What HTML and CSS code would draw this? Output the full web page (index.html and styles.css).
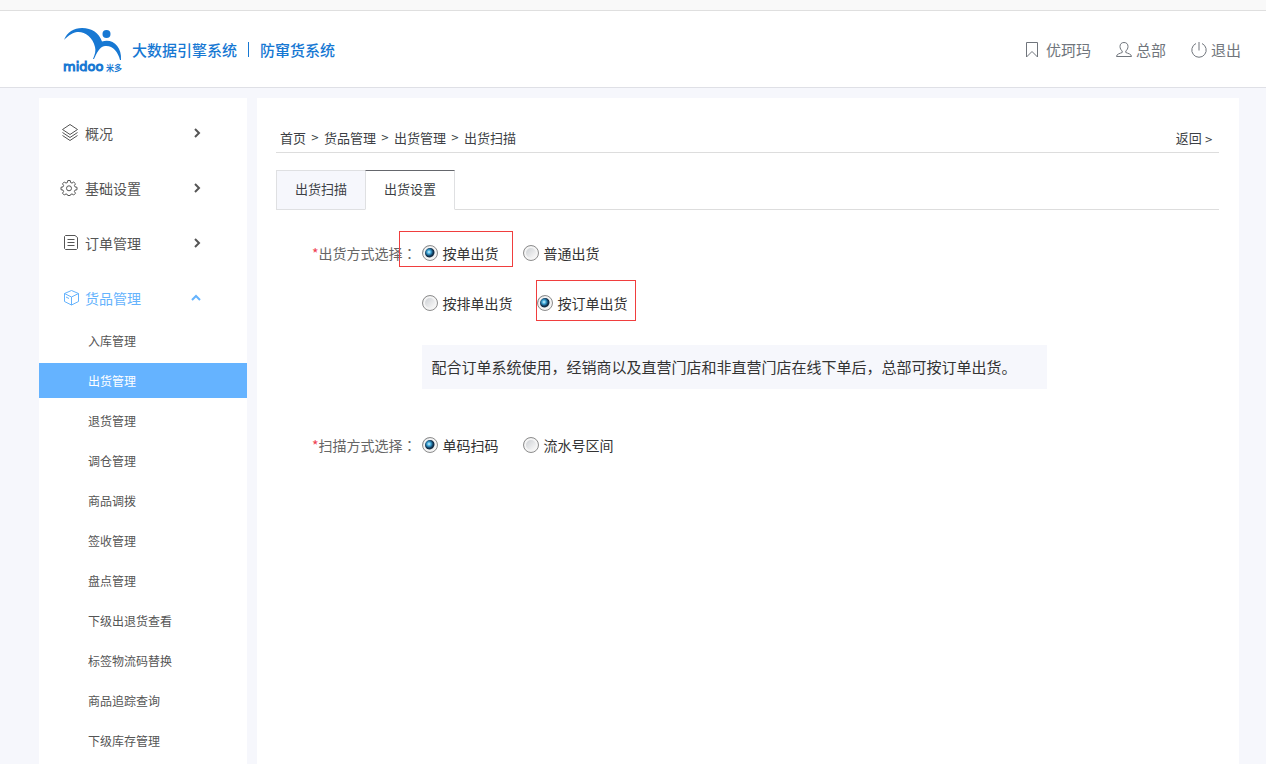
FILE: index.html
```html
<!DOCTYPE html>
<html lang="zh-CN">
<head>
<meta charset="utf-8">
<meta name="viewport" content="width=device-width, initial-scale=1">
<title>防窜货系统</title>
<link rel="stylesheet" href="styles.css">
</head>
<body>
<header class="header">
  <div class="brand">
    <svg class="logo" viewBox="0 0 60 48" role="img" aria-label="midoo 米多">
      <path d="M1 14C4 6 11 2 19 2C29 2 36 7 39 15.500C49 12 59 20 58 34H57C55 25 49 19 42 20C36 21 34 27 31 33H30C32 28 33 25 32 21C30 11 21 5 14 6C8 7 4 11 1 14Z"/>
      <circle cx="43.500" cy="8" r="4"/>
      <text class="logo-latin" x="0" y="45">midoo</text>
      <text class="logo-cjk" x="43" y="45">米多</text>
    </svg>
    <h1 class="title"><span>大数据引擎系统</span><span class="title-bar"></span><span>防窜货系统</span></h1>
  </div>
  <nav class="user-nav">
    <a class="user-link bookmark" href="#">
      <svg class="user-icon" viewBox="0 0 16 16"><path d="M2.500 .500h11v14.500L8 9.500L2.500 15z"/></svg>优珂玛</a>
    <a class="user-link" href="#">
      <svg class="user-icon" viewBox="0 0 16 16"><path d="M8 .500C5.500 .500 4 2 4 4.500C4 6.500 5 8 6.200 9V10.500C4 11.500 .500 12 .500 14.500H15.500C15.500 12 12 11.500 9.800 10.500V9C11 8 12 6.500 12 4.500C12 2 10.500 .500 8 .500Z"/></svg>总部</a>
    <a class="user-link" href="#">
      <svg class="user-icon" viewBox="0 0 16 16"><path d="M8 0v8.500M5 1.500A7.200 7.200 0 1 0 11 1.500"/></svg>退出</a>
  </nav>
</header>
<div class="page">
  <aside class="sidebar">
    <button class="menu" type="button">
      <svg class="menu-icon" viewBox="0 0 18 18"><path d="M9 .500L16.500 5.500L9 10.500L1.500 5.500zM1.500 8.500L9 13.500L16.500 8.500M1.500 11.500L9 16.500L16.500 11.500"/></svg>
      <span class="menu-text">概况</span>
      <svg class="arrow" viewBox="0 0 10 10"><path d="M3 1l4 4l-4 4"/></svg>
    </button>
    <button class="menu" type="button">
      <svg class="menu-icon" viewBox="0 0 18 18"><path d="M6.800 1.500h2.400l.400 2l1.400.600l1.700-1.100l1.800 1.800l-1.100 1.700l.600 1.400l2 .400v2.400l-2 .400l-.600 1.400l1.100 1.700l-1.800 1.800l-1.700-1.100l-1.400.600l-.400 1h-2.400l-.400-1l-1.400-.600l-1.700 1.100l-1.800-1.800l1.100-1.700l-.600-1.400l-2-.400V8.300l2-.400l.600-1.400l-1.100-1.700l1.800-1.800l1.700 1.100l1.400-.600z"/><circle cx="8" cy="9.300" r="2.500"/></svg>
      <span class="menu-text">基础设置</span>
      <svg class="arrow" viewBox="0 0 10 10"><path d="M3 1l4 4l-4 4"/></svg>
    </button>
    <button class="menu" type="button">
      <svg class="menu-icon" viewBox="0 0 18 18"><path d="M4.500 1.500h9.500l2.500 2v11l-1 1h-11l-1-1v-12zM6.500 5.500h7M6.500 8.500h7M6.500 11.500h7"/></svg>
      <span class="menu-text">订单管理</span>
      <svg class="arrow" viewBox="0 0 10 10"><path d="M3 1l4 4l-4 4"/></svg>
    </button>
    <button class="menu menu-open" type="button" aria-expanded="true">
      <svg class="menu-icon" viewBox="0 0 18 18"><path d="M10.500 1.500L17.500 4.500V12.500L10.500 16L3.500 12.500V4.500zM3.500 4.500L10.500 8L17.500 4.500M10.500 8V16M5 8l3 1.500"/></svg>
      <span class="menu-text">货品管理</span>
      <svg class="arrow" viewBox="0 0 10 10"><path d="M0 7l4-4l4 4"/></svg>
    </button>
    <nav class="submenu">
      <a class="sub" href="#">入库管理</a>
      <a class="sub sub-active" href="#" aria-current="page">出货管理</a>
      <a class="sub" href="#">退货管理</a>
      <a class="sub" href="#">调仓管理</a>
      <a class="sub" href="#">商品调拨</a>
      <a class="sub" href="#">签收管理</a>
      <a class="sub" href="#">盘点管理</a>
      <a class="sub" href="#">下级出退货查看</a>
      <a class="sub" href="#">标签物流码替换</a>
      <a class="sub" href="#">商品追踪查询</a>
      <a class="sub" href="#">下级库存管理</a>
    </nav>
  </aside>
  <main class="content">
    <div class="crumbs">
      <nav class="path">
        <a href="#">首页</a><span class="sep">&gt;</span><a href="#">货品管理</a><span class="sep">&gt;</span><a href="#">出货管理</a><span class="sep">&gt;</span><span>出货扫描</span>
      </nav>
      <a class="back" href="#">返回 <span class="latin">&gt;</span></a>
    </div>
    <div class="tabs" role="tablist">
      <button class="tab" type="button" role="tab" aria-selected="false">出货扫描</button>
      <button class="tab tab-active" type="button" role="tab" aria-selected="true">出货设置</button>
    </div>
    <form class="form">
      <div class="field" role="radiogroup" aria-labelledby="ship-label">
        <span class="label" id="ship-label"><span class="star">*</span>出货方式选择<span class="colon" lang="zh-TW">：</span></span>
        <div class="field-body">
          <div class="options">
            <label class="option mark mark-first"><input class="radio" type="radio" name="ship" checked>按单出货</label>
            <label class="option"><input class="radio" type="radio" name="ship">普通出货</label>
          </div>
          <div class="options">
            <label class="option"><input class="radio" type="radio" name="order">按排单出货</label>
            <label class="option mark mark-second"><input class="radio" type="radio" name="order" checked>按订单出货</label>
          </div>
          <p class="note">配合订单系统使用，经销商以及直营门店和非直营门店在线下单后，总部可按订单出货。</p>
        </div>
      </div>
      <div class="field" role="radiogroup" aria-labelledby="scan-label">
        <span class="label" id="scan-label"><span class="star">*</span>扫描方式选择<span class="colon" lang="zh-TW">：</span></span>
        <div class="options">
          <label class="option"><input class="radio" type="radio" name="scan" checked>单码扫码</label>
          <label class="option"><input class="radio" type="radio" name="scan">流水号区间</label>
        </div>
      </div>
    </form>
  </main>
</div>
</body>
</html>
```

FILE: styles.css
```css
* {
  box-sizing: border-box;
}

body {
  margin: 0;
  min-height: 100vh;
  display: flex;
  flex-direction: column;
  background: #f6f7fc;
  color: #333;
  font-family: "Noto Sans CJK SC", "Noto Sans", sans-serif;
  font-size: 14px;
  line-height: 24px;
}

a {
  color: inherit;
  text-decoration: none;
}

button {
  border: 0;
  background: none;
  color: inherit;
  font: inherit;
  cursor: pointer;
}

svg {
  flex: none;
  fill: none;
  stroke: currentColor;
  overflow: visible;
}

/* Header */
.header {
  display: flex;
  align-items: center;
  justify-content: space-between;
  height: 88px;
  padding: 2px 25px 0 63px;
  border-top: 10px solid #f9f9f9;
  border-bottom: 1px solid #dfe0e6;
  background: #fff;
  box-shadow: inset 0 1px #dfdfdf;
}

.brand {
  display: flex;
  align-items: center;
  gap: 9px;
}

.logo {
  width: 60px;
  height: 48px;
  fill: #1778d3;
  stroke: none;
}

.logo-latin {
  font: 13px "DejaVu Sans", sans-serif;
  stroke: #1778d3;
  stroke-width: 1;
}

.logo-cjk {
  font: bold 8px "Noto Sans CJK SC", sans-serif;
}

.title {
  display: flex;
  align-items: center;
  margin: 0;
  color: #1778d3;
  font-size: 15px;
  font-weight: 500;
}

.title-bar {
  width: 1px;
  height: 15px;
  margin: 0 11px;
  background: #1778d3;
}

.user-nav {
  display: flex;
  gap: 25px;
  color: #70757c;
  font-size: 15px;
}

.user-link {
  display: flex;
  align-items: center;
  gap: 4px;
}

.bookmark {
  gap: 6px;
}

.user-icon {
  width: 16px;
  height: 16px;
}

/* Page */
.page {
  flex: 1;
  display: flex;
  gap: 10px;
  padding: 10px 27px 0 39px;
}

.sidebar {
  flex: none;
  width: 208px;
  padding-top: 10px;
  background: #fff;
  color: #555;
}

.menu {
  display: flex;
  align-items: center;
  gap: 6px;
  width: 100%;
  height: 50px;
  margin-bottom: 5px;
  padding: 0 45px 0 22px;
  text-align: left;
}

.menu-open {
  margin-bottom: 0;
  color: #65b3fd;
}

.menu-icon {
  width: 18px;
  height: 18px;
}

.menu-text {
  flex: 1;
}

.arrow {
  width: 10px;
  height: 10px;
  stroke-width: 2;
}

.submenu {
  display: grid;
  gap: 5px;
  padding-bottom: 5px;
}

.sub {
  padding: 0 49px;
  font-size: 12px;
  line-height: 35px;
}

.sub-active {
  background: #65b3ff;
  color: #fff;
}

/* Content */
.content {
  flex: 1;
  min-width: 0;
  padding: 28px 20px 20px 19px;
  background: #fff;
}

.crumbs {
  display: flex;
  justify-content: space-between;
  padding: 0 6px 2px 4px;
  border-bottom: 1px solid #ddd;
  color: #3c3f45;
  font-size: 13px;
}

.path,
.back {
  line-height: 24px;
}

.path {
  display: flex;
}

.sep,
.latin {
  font-family: "DejaVu Sans", sans-serif;
  font-size: 10px;
}

.sep {
  width: 18px;
  text-align: center;
}

.tabs {
  display: flex;
  margin-top: 17px;
  border-bottom: 1px solid #ddd;
}

.crumbs {
  padding-bottom: 0;
}

.tab {
  height: 40px;
  margin-bottom: -1px;
  padding: 0 18px 2px;
  border: 1px solid #dfe0e2;
  background: #f6f7fc;
  color: #3c3f45;
  font-size: 13px;
}

.tab-active {
  margin-left: -1px;
  border-top-color: #65676d;
  border-bottom-color: #fff;
  background: #fff;
}

.form {
  display: grid;
  gap: 44px;
  padding: 31px 0 0 36px;
}

.field {
  display: flex;
  gap: 5px;
}

.label {
  flex: none;
  color: #666;
}

.colon {
  font-family: "Noto Sans CJK TC", sans-serif;
}

.star {
  color: #ef3e50;
}

.field-body {
  display: grid;
  gap: 26px;
}

.options {
  display: flex;
  gap: 24px;
}

.option {
  position: relative;
  display: flex;
  align-items: center;
  gap: 5px;
}

.radio {
  appearance: none;
  width: 16px;
  height: 16px;
  margin: 0;
  border: 1px solid #8d8d8d;
  border-radius: 50%;
  background: linear-gradient(135deg, #c4c8cd, #f4f4f4 75%);
  box-shadow: inset 0 0 0 2px #f4f4f4;
}

.radio:checked {
  background: radial-gradient(circle at 6px 6px, #d9f6ff 0, #3ba6d8 2px, #123a5c 4px, #10273d 5px, #e4e6e8 6px);
}

/* Red frames round the highlighted options */
.mark::after {
  content: "";
  position: absolute;
  border: 1px solid #f03e3e;
  pointer-events: none;
}

.mark-first::after {
  inset: -10px -14px -2px -23px;
}

.mark-second::after {
  inset: -11px -8px -6px -1px;
}

.note {
  margin: 4px 0 0;
  padding: 10px 30px 10px 10px;
  background: #f6f7fc;
  font-size: 15px;
}
```
